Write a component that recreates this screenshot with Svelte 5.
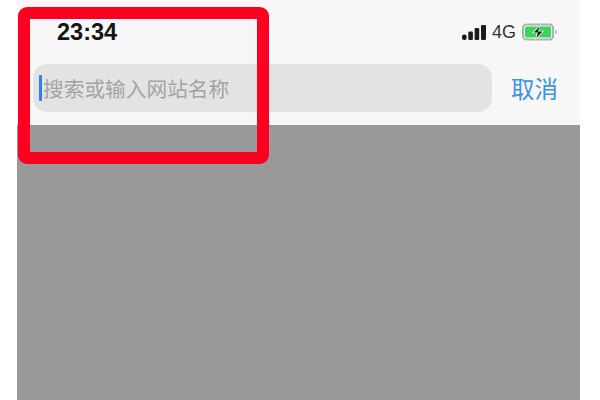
<script>
    let placeholder = '搜索或输入网站名称'
</script>

<div class="page">
    <div class="phone">
        <header>
            <div class="status">
                <span class="time">23:34</span>
                <div class="indicators">
                    <svg class="signal" width="24" height="15" viewBox="0 0 24 15">
                        <rect x="0" y="9.5" width="4.6" height="5.5" rx="2" />
                        <rect x="6.3" y="6.5" width="4.6" height="8.5" rx="1.2" />
                        <rect x="12.6" y="3" width="4.6" height="12" rx="1.2" />
                        <rect x="19" y="0" width="5" height="15" rx="1.2" />
                    </svg>
                    <span class="net">4G</span>
                    <svg class="battery" width="36" height="18" viewBox="0 0 36 18">
                        <rect x="1" y="1.5" width="30" height="15" rx="3.5" fill="none" stroke="#a6b8a6" stroke-width="2" />
                        <rect x="3" y="3.5" width="26" height="11" rx="1.5" fill="#3fd25f" />
                        <path d="M19 0.8 L9.8 10.2 H14.8 L13 17.2 L22.2 7.8 H16.8 Z" fill="#eafbe9" />
                        <path d="M18 3 L11.8 9.4 H16 L14.4 15 L20.4 8.6 H15.8 Z" fill="#1a1a1a" />
                        <path d="M33 7 q2 .5 2 2 t-2 2z" fill="#b5b5b5" />
                    </svg>
                </div>
            </div>
            <div class="search">
                <div class="field">
                    <i class="caret"></i>
                    <span>{placeholder}</span>
                </div>
                <span class="cancel">取消</span>
            </div>
        </header>
        <div class="dim"></div>
    </div>
    <div class="mark"></div>
</div>

<style>
    :global(body) {
        background: #fff;
        overflow: hidden;
    }

    .page {
        position: relative;
        width: 600px;
        height: 400px;
        padding: 0 20px 0 17px;
        box-sizing: border-box;
        font-family: "Liberation Sans", "Noto Sans CJK SC", sans-serif;
    }

    .phone {
        display: flex;
        flex-direction: column;
        height: 100%;
    }

    header {
        height: 125px;
        box-sizing: border-box;
        background: #f7f7f7;
        padding: 0 22px 0 16px;
        flex: none;
    }

    .status {
        display: flex;
        justify-content: space-between;
        align-items: center;
        height: 32px;
        padding: 16px 0 0 24px;
    }

    .time {
        font-size: 23.5px;
        font-weight: bold;
        color: #151515;
    }

    .indicators {
        display: flex;
        align-items: center;
        gap: 6px;
    }

    .signal {
        fill: #1a1a1a;
    }

    .net {
        font-size: 18px;
        color: #333;
    }

    .search {
        display: flex;
        align-items: center;
        justify-content: space-between;
        margin-top: 16px;
    }

    .field {
        width: 459px;
        height: 48px;
        box-sizing: border-box;
        background: #e3e3e3;
        border-radius: 14px;
        display: flex;
        align-items: center;
        padding-left: 6px;
    }

    .caret {
        width: 3px;
        height: 26px;
        background: #2f80ed;
        border-radius: 1px;
        margin-right: 1px;
    }

    .field span {
        font-size: 20.7px;
        color: #a3a3a3;
    }

    .cancel {
        font-size: 23.5px;
        color: #3d93e6;
    }

    .dim {
        flex: 1;
        background: #999;
    }

    .mark {
        position: absolute;
        left: 18px;
        top: 7px;
        width: 251px;
        height: 157px;
        box-sizing: border-box;
        border: 12px solid #fb0020;
        border-radius: 9px;
    }
</style>
